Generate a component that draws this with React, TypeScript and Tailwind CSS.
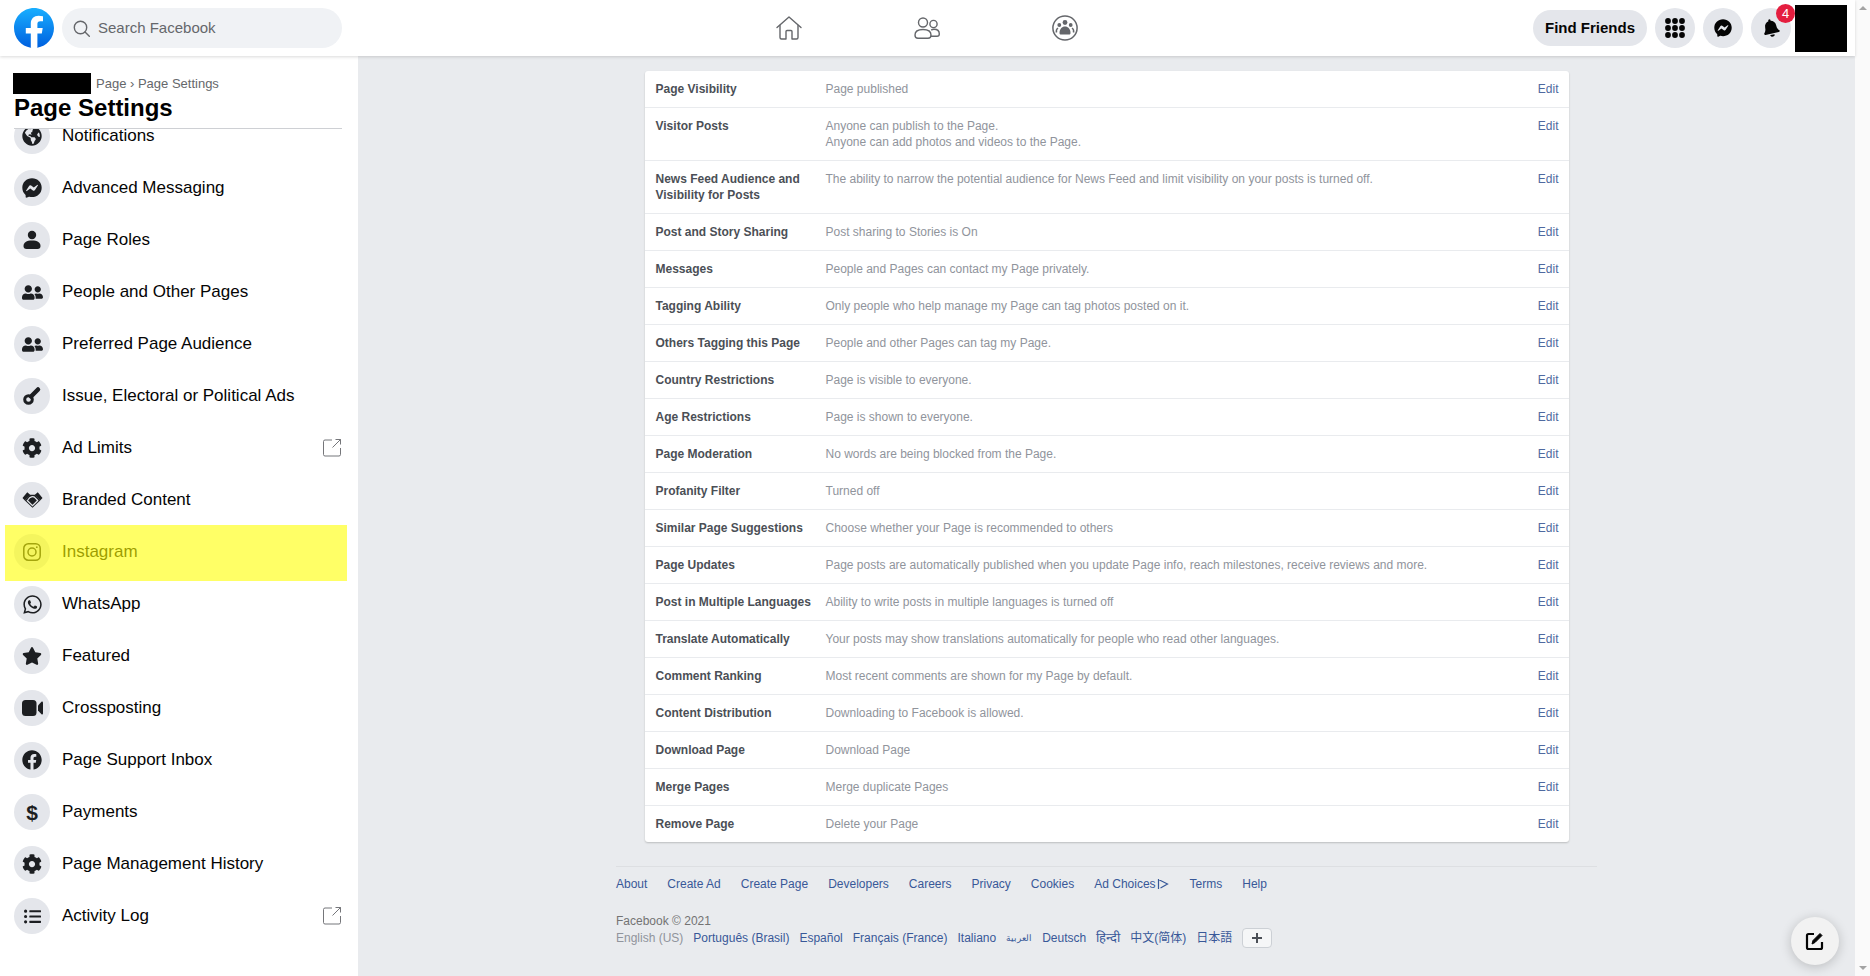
import type { ReactNode } from 'react'
import {
  FaBell,
  FaCog,
  FaFacebook,
  FaFacebookMessenger,
  FaGlobeAmericas,
  FaListUl,
  FaStar,
  FaUserFriends,
  FaWhatsapp,
} from 'react-icons/fa'

function UserIcon() {
  return (
    <svg viewBox="0 0 20 20" className="w-5 h-5" fill="currentColor">
      <circle cx="10" cy="5" r="4.200" />
      <path d="M1.500 16c0-3.500 3-5.500 8.500-5.500s8.500 2 8.500 5.500c0 2-1 3-3 3h-11c-2 0-3-1-3-3z" />
    </svg>
  )
}

function KeyIcon() {
  return (
    <svg viewBox="0 0 20 20" className="w-5 h-5" fill="none" stroke="currentColor">
      <circle cx="6.500" cy="13.500" r="3.800" strokeWidth="3" />
      <path d="m9 10.500 7-7" strokeWidth="4.500" strokeLinecap="round" />
    </svg>
  )
}

function HandshakeIcon() {
  return (
    <svg viewBox="0 0 22 18" className="w-[21px] h-[18px]">
      <path fill="currentColor" d="M5.500 1 .5 7l2.500 2.500L8.500 3.500zM16.500 1l5 6-2.500 2.500-5.500-6z" />
      <path fill="currentColor" d="M8 3.500h6l5 6-8 7.500-8-7.500z" />
      <path fill="none" stroke="#e4e6eb" strokeWidth="1.300" strokeLinecap="round" d="M5.500 9.500 11 15l5.500-5.500M6.500 8.500c2-3 5-3.500 6.500-2.500l3.500 3.500" />
    </svg>
  )
}

function InstagramIcon() {
  return (
    <svg viewBox="0 0 18 18" className="w-[18px] h-[18px]" fill="none" stroke="currentColor" strokeWidth="1.500">
      <rect x="0.800" y="0.800" width="16.400" height="16.400" rx="4.500" />
      <circle cx="9" cy="9" r="4" />
      <circle cx="13.800" cy="4.200" r="0.900" fill="currentColor" stroke="none" />
    </svg>
  )
}

function VideoIcon() {
  return (
    <svg viewBox="0 0 21 18" className="w-[21px] h-[18px]" fill="currentColor">
      <rect x="0" y="1" width="14.500" height="16" rx="3.500" />
      <path d="M16 6.500 19.500 2.800c.6-.6 1.500-.2 1.500.6v11.200c0 .8-.9 1.200-1.500.6L16 11.500z" />
    </svg>
  )
}

const menu: { label: string; icon: ReactNode; external?: boolean; marked?: boolean }[] = [
  { label: 'Notifications', icon: <FaGlobeAmericas size={20} /> },
  { label: 'Advanced Messaging', icon: <FaFacebookMessenger size={20} /> },
  { label: 'Page Roles', icon: <UserIcon /> },
  { label: 'People and Other Pages', icon: <FaUserFriends size={21} /> },
  { label: 'Preferred Page Audience', icon: <FaUserFriends size={21} /> },
  { label: 'Issue, Electoral or Political Ads', icon: <KeyIcon /> },
  { label: 'Ad Limits', icon: <FaCog size={20} />, external: true },
  { label: 'Branded Content', icon: <HandshakeIcon /> },
  { label: 'Instagram', icon: <InstagramIcon />, marked: true },
  { label: 'WhatsApp', icon: <FaWhatsapp size={21} /> },
  { label: 'Featured', icon: <FaStar size={20} /> },
  { label: 'Crossposting', icon: <VideoIcon /> },
  { label: 'Page Support Inbox', icon: <FaFacebook size={20} /> },
  { label: 'Payments', icon: <span className="text-[21px] font-bold leading-none">$</span> },
  { label: 'Page Management History', icon: <FaCog size={20} /> },
  { label: 'Activity Log', icon: <FaListUl size={17} />, external: true },
]

const settings: { name: ReactNode; value: ReactNode }[] = [
  { name: 'Page Visibility', value: 'Page published' },
  {
    name: 'Visitor Posts',
    value: (
      <>
        Anyone can publish to the Page.
        <br />
        Anyone can add photos and videos to the Page.
      </>
    ),
  },
  {
    name: (
      <>
        News Feed Audience and
        <br />
        Visibility for Posts
      </>
    ),
    value: 'The ability to narrow the potential audience for News Feed and limit visibility on your posts is turned off.',
  },
  { name: 'Post and Story Sharing', value: 'Post sharing to Stories is On' },
  { name: 'Messages', value: 'People and Pages can contact my Page privately.' },
  { name: 'Tagging Ability', value: 'Only people who help manage my Page can tag photos posted on it.' },
  { name: 'Others Tagging this Page', value: 'People and other Pages can tag my Page.' },
  { name: 'Country Restrictions', value: 'Page is visible to everyone.' },
  { name: 'Age Restrictions', value: 'Page is shown to everyone.' },
  { name: 'Page Moderation', value: 'No words are being blocked from the Page.' },
  { name: 'Profanity Filter', value: 'Turned off' },
  { name: 'Similar Page Suggestions', value: 'Choose whether your Page is recommended to others' },
  { name: 'Page Updates', value: 'Page posts are automatically published when you update Page info, reach milestones, receive reviews and more.' },
  { name: 'Post in Multiple Languages', value: 'Ability to write posts in multiple languages is turned off' },
  { name: 'Translate Automatically', value: 'Your posts may show translations automatically for people who read other languages.' },
  { name: 'Comment Ranking', value: 'Most recent comments are shown for my Page by default.' },
  { name: 'Content Distribution', value: 'Downloading to Facebook is allowed.' },
  { name: 'Download Page', value: 'Download Page' },
  { name: 'Merge Pages', value: 'Merge duplicate Pages' },
  { name: 'Remove Page', value: 'Delete your Page' },
]

function Logo() {
  return (
    <svg viewBox="0 0 40 40" className="w-10 h-10">
      <defs>
        <linearGradient id="fb" x1="50%" y1="97%" x2="50%" y2="0%">
          <stop offset="0%" stopColor="#0062e0" />
          <stop offset="100%" stopColor="#19afff" />
        </linearGradient>
      </defs>
      <path
        fill="url(#fb)"
        d="M16.7 39.8C7.2 38.1 0 29.9 0 20 0 9 9 0 20 0s20 9 20 20c0 9.9-7.2 18.1-16.7 19.8l-1.1-.9h-4.4l-1.1.9z"
      />
      <path
        fill="#fff"
        d="M27.8 25.6l.9-5.6h-5.3v-3.9c0-1.6.6-2.8 3-2.8H29V8.2c-1.4-.2-3-.4-4.4-.4-4.6 0-7.8 2.8-7.8 7.8V20h-5v5.6h5v14.1c1.1.2 2.2.3 3.3.3 1.1 0 2.2-.1 3.3-.3V25.6h4.4z"
      />
    </svg>
  )
}

function NavIcons() {
  return (
    <div className="flex items-center gap-[112px] ml-[434px] text-[#65676b]">
      <svg viewBox="0 0 26 24" className="w-[26px] h-[24px]" fill="none" stroke="currentColor" strokeWidth="1.400" strokeLinejoin="round" strokeLinecap="round">
        <path d="M1 11.500 13 1l12 10.500" />
        <path d="M4 9.500V21.500a1.500 1.500 0 0 0 1.500 1.500H10v-7.500a1 1 0 0 1 1-1h4a1 1 0 0 1 1 1V23h4.500a1.500 1.500 0 0 0 1.500-1.500V9.500" />
      </svg>
      <svg viewBox="0 0 26 22" className="w-[26px] h-[22px]" fill="none" stroke="currentColor" strokeWidth="1.400">
        <circle cx="9" cy="5.500" r="4.500" />
        <circle cx="19.500" cy="7" r="3.600" />
        <path d="M1 18c0-3.500 3-5.500 8-5.500s8 2 8 5.500c0 2.200-1 3.200-3 3.200H4c-2 0-3-1-3-3.200z" />
        <path d="M17.200 13c1-.5 1.800-.7 2.800-.7 3.500 0 5.300 1.700 5.300 4.600 0 1.400-.8 2.300-2.300 2.300h-6" />
      </svg>
      <svg viewBox="0 0 26 26" className="w-[26px] h-[26px]" fill="currentColor">
        <circle cx="13" cy="13" r="12.100" fill="none" stroke="currentColor" strokeWidth="1.500" />
        <circle cx="13" cy="7.500" r="2.400" />
        <circle cx="7.300" cy="10" r="1.900" />
        <circle cx="18.700" cy="10" r="1.900" />
        <path d="M7.500 18c0-4 2.500-6.500 5.500-6.500s5.500 2.500 5.500 6.500c0 1-.6 1.500-1.500 1.500H9c-.9 0-1.500-.5-1.500-1.500z" />
        <path d="M4.500 17.500c-.5-2 0-3.500 1.500-4.500M21.500 17.500c.5-2 0-3.500-1.500-4.500" fill="none" stroke="currentColor" strokeWidth="1.500" />
      </svg>
    </div>
  )
}

function CircleButton({ children }: { children: ReactNode }) {
  return (
    <div className="relative flex items-center justify-center w-10 h-10 rounded-full bg-[#e4e6eb] text-[#050505]">
      {children}
    </div>
  )
}

function Header() {
  return (
    <header className="relative z-10 flex items-center h-14 pl-[14px] pr-2 bg-white shadow-[0_1px_3px_rgba(0,0,0,0.15)]">
      <Logo />
      <div className="flex items-center gap-2 w-[280px] h-10 ml-2 pl-[11px] rounded-full bg-[#f0f2f5] text-[15px] text-[#65676b]">
        <svg viewBox="0 0 17 17" className="w-[17px] h-[17px]" fill="none" stroke="currentColor" strokeWidth="1.400">
          <circle cx="7.500" cy="7.500" r="6.200" />
          <path d="m12 12 4.300 4.300" strokeLinecap="round" />
        </svg>
        Search Facebook
      </div>
      <NavIcons />
      <div className="flex items-center ml-auto">
        <div className="flex items-center h-9 px-3 rounded-full bg-[#e4e6eb] text-[15px] font-bold text-[#050505]">Find Friends</div>
        <div className="flex items-center gap-2 ml-2">
          <CircleButton>
            <svg viewBox="0 0 20 20" className="w-5 h-5" fill="currentColor">
              {[3, 10, 17].flatMap((y) =>
                [3, 10, 17].map((x) => <circle key={`${x}-${y}`} cx={x} cy={y} r="2.900" />),
              )}
            </svg>
          </CircleButton>
          <CircleButton>
            <FaFacebookMessenger size={18} />
          </CircleButton>
          <CircleButton>
            <FaBell size={18} className="-rotate-12" />
            <span className="absolute -top-1 -right-1 flex items-center justify-center w-[19px] h-[19px] rounded-full bg-[#e41e3f] text-[13px] text-white">4</span>
          </CircleButton>
        </div>
        <div className="w-[52px] h-[47px] ml-1 bg-black" />
      </div>
    </header>
  )
}

function ExternalIcon() {
  return (
    <svg viewBox="0 0 18 18" className="w-[18px] h-[18px] ml-auto" fill="none" stroke="#65676b" strokeWidth="0.900">
      <path d="M9 1H2a1.500 1.500 0 0 0-1.500 1.500v13A1.500 1.500 0 0 0 2 17h14a1.500 1.500 0 0 0 1.500-1.500V9" />
      <path d="M9.500 8.500 17.500.5M12.500.5h5v5" />
    </svg>
  )
}

function Sidebar() {
  return (
    <aside className="flex flex-col w-[358px] shrink-0 bg-white shadow-[1px_0_2px_rgba(0,0,0,0.1)]">
      <div className="w-[328px] ml-[14px] h-[73px] pt-[17px] border-b border-[#ced0d4]">
        <div className="flex items-center h-[21px] text-[13px] text-[#65676b]">
          <span className="w-[78px] h-[21px] -ml-px mr-[5px] bg-black" />
          Page › Page Settings
        </div>
        <h1 className="text-2xl leading-7 font-bold text-black">Page Settings</h1>
      </div>
      <div className="flex-1 overflow-hidden">
        <div className="-mt-[19px]">
          {menu.map((item) => (
            <div key={item.label} className="relative flex items-center h-[52px] pl-[14px] pr-[17px] text-[17px] text-[#050505]">
              <span className="flex items-center justify-center w-9 h-9 rounded-full bg-[#e4e6eb] text-[#1c1e21] mr-3">{item.icon}</span>
              {item.label}
              {item.external && <ExternalIcon />}
              {item.marked && <div className="absolute left-[5px] right-[11px] -top-[1px] -bottom-[3px] bg-[#ffff00]/60" />}
            </div>
          ))}
        </div>
      </div>
    </aside>
  )
}

function SettingsTable() {
  return (
    <div className="w-[924px] shrink-0 rounded-[3px] bg-white shadow-[0_1px_2px_rgba(0,0,0,0.2)] text-xs leading-4">
      {settings.map((row, i) => (
        <div key={i} className="flex pl-[11px] pr-[10px] py-[10px] border-b border-[#e9ebee] last:border-b-0">
          <div className="w-[170px] shrink-0 font-bold text-[#4b4f56]">{row.name}</div>
          <div className="flex-1 text-[#90949c]">{row.value}</div>
          <div className="text-[#4f6aa0]">Edit</div>
        </div>
      ))}
    </div>
  )
}

function Footer() {
  const links = ['About', 'Create Ad', 'Create Page', 'Developers', 'Careers', 'Privacy', 'Cookies']
  return (
    <footer className="w-[981px] mt-6 pt-[9px] border-t border-[#dddfe2] text-xs text-[#385898]">
      <div className="flex items-center gap-5 h-[15px]">
        {links.map((l) => (
          <span key={l}>{l}</span>
        ))}
        <span className="flex items-center">
          Ad Choices
          <svg viewBox="0 0 14 12" className="w-[14px] h-3" fill="none" stroke="currentColor" strokeWidth="1.200">
            <path d="M2.500 1v10M2.500 1.500 11.500 6l-7 4" />
          </svg>
        </span>
        <span>Terms</span>
        <span>Help</span>
      </div>
      <div className="mt-[22px] h-[15px] text-[#737373]">Facebook © 2021</div>
      <div className="flex items-center gap-[10px] h-5 font-['Liberation_Sans','Noto_Sans_CJK_JP',sans-serif]">
        <span className="text-[#90949c]">English (US)</span>
        <span>Português (Brasil)</span>
        <span>Español</span>
        <span>Français (France)</span>
        <span>Italiano</span>
        <span className="text-[9px]">العربية</span>
        <span>Deutsch</span>
        <span className="text-[13px]">हिन्दी</span>
        <span>中文(简体)</span>
        <span>日本語</span>
        <span className="flex items-center justify-center w-[30px] h-5 border border-[#ccd0d5] rounded-sm bg-[#f5f6f7] text-[#4b4f56]">
          <svg viewBox="0 0 10 10" className="w-[10px] h-[10px]" fill="none" stroke="currentColor" strokeWidth="2">
            <path d="M5 0v10M0 5h10" />
          </svg>
        </span>
      </div>
    </footer>
  )
}

export default function App() {
  return (
    <div className="flex h-screen overflow-hidden font-['Liberation_Sans',Arial,sans-serif]">
      <div className="relative flex flex-col flex-1 min-w-0">
        <Header />
        <div className="flex flex-1 min-h-0">
          <Sidebar />
          <main className="flex flex-col flex-1 items-center pt-[15px] bg-[#e9ebee]">
            <SettingsTable />
            <Footer />
          </main>
        </div>
        <div className="absolute right-[16px] bottom-[11px] flex items-center justify-center w-12 h-12 rounded-full bg-[#f2f2f2] shadow-[0_2px_12px_rgba(0,0,0,0.2)]">
          <svg viewBox="0 0 20 20" className="w-5 h-5" fill="none" stroke="#050505" strokeWidth="2.200" strokeLinejoin="round">
            <path d="M9 3H3.500A1.500 1.500 0 0 0 2 4.500v12A1.500 1.500 0 0 0 3.500 18h12a1.500 1.500 0 0 0 1.500-1.500V11" />
            <path d="M7 13l1-3.500L15 2.500 17 4.500 10 11.500z" fill="#050505" strokeWidth="1" />
          </svg>
        </div>
      </div>
      <div className="flex flex-col items-center justify-between w-[15px] shrink-0 py-[6px] bg-[#fafafa]">
        <div className="w-0 h-0 border-x-[4px] border-x-transparent border-b-[4px] border-b-[#a3a3a3]" />
        <div className="w-0 h-0 border-x-[4px] border-x-transparent border-t-[4px] border-t-[#a3a3a3]" />
      </div>
    </div>
  )
}
